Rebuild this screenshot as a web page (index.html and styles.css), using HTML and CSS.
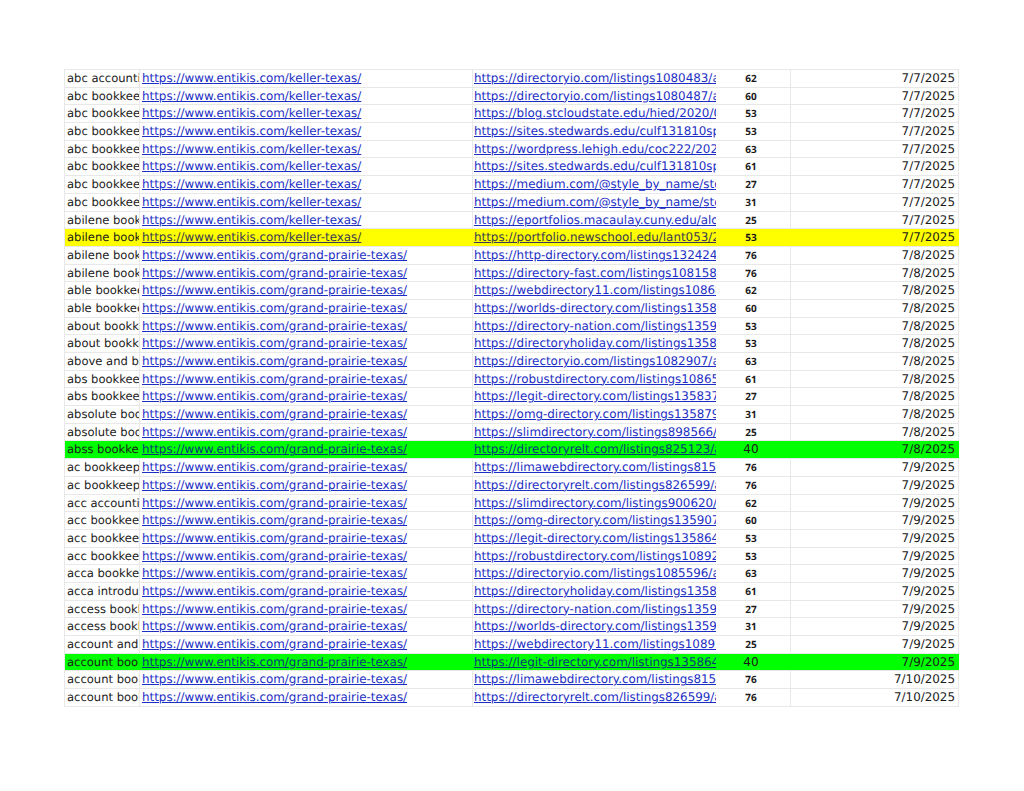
FILE: index.html
```html
<!DOCTYPE html>
<html lang="en">
<head>
<meta charset="utf-8">
<title>Listings</title>
<link rel="stylesheet" href="styles.css">
</head>
<body>
<main class="sheet">
<div class="row"><div class="c kw">abc accounting</div><div class="c site"><a href="#">https://www.entikis.com/keller-texas/</a></div><div class="c url"><a href="#">https://directoryio.com/listings1080483/abc</a></div><div class="c num">62</div><div class="c date">7/7/2025</div></div>
<div class="row"><div class="c kw">abc bookkeeping</div><div class="c site"><a href="#">https://www.entikis.com/keller-texas/</a></div><div class="c url"><a href="#">https://directoryio.com/listings1080487/abc</a></div><div class="c num">60</div><div class="c date">7/7/2025</div></div>
<div class="row"><div class="c kw">abc bookkeeping</div><div class="c site"><a href="#">https://www.entikis.com/keller-texas/</a></div><div class="c url"><a href="#">https://blog.stcloudstate.edu/hied/2020/05/abc</a></div><div class="c num">53</div><div class="c date">7/7/2025</div></div>
<div class="row"><div class="c kw">abc bookkeeping</div><div class="c site"><a href="#">https://www.entikis.com/keller-texas/</a></div><div class="c url"><a href="#">https://sites.stedwards.edu/culf131810spring</a></div><div class="c num">53</div><div class="c date">7/7/2025</div></div>
<div class="row"><div class="c kw">abc bookkeeping</div><div class="c site"><a href="#">https://www.entikis.com/keller-texas/</a></div><div class="c url"><a href="#">https://wordpress.lehigh.edu/coc222/2025/07</a></div><div class="c num">63</div><div class="c date">7/7/2025</div></div>
<div class="row"><div class="c kw">abc bookkeeping</div><div class="c site"><a href="#">https://www.entikis.com/keller-texas/</a></div><div class="c url"><a href="#">https://sites.stedwards.edu/culf131810spring</a></div><div class="c num">61</div><div class="c date">7/7/2025</div></div>
<div class="row"><div class="c kw">abc bookkeeping</div><div class="c site"><a href="#">https://www.entikis.com/keller-texas/</a></div><div class="c url"><a href="#">https://medium.com/@style_by_name/story</a></div><div class="c num">27</div><div class="c date">7/7/2025</div></div>
<div class="row"><div class="c kw">abc bookkeeping</div><div class="c site"><a href="#">https://www.entikis.com/keller-texas/</a></div><div class="c url"><a href="#">https://medium.com/@style_by_name/story</a></div><div class="c num">31</div><div class="c date">7/7/2025</div></div>
<div class="row"><div class="c kw">abilene bookkeeping</div><div class="c site"><a href="#">https://www.entikis.com/keller-texas/</a></div><div class="c url"><a href="#">https://eportfolios.macaulay.cuny.edu/alons</a></div><div class="c num">25</div><div class="c date">7/7/2025</div></div>
<div class="row yellow"><div class="c kw">abilene bookkeeping</div><div class="c site"><a href="#">https://www.entikis.com/keller-texas/</a></div><div class="c url"><a href="#">https://portfolio.newschool.edu/lant053/2025</a></div><div class="c num">53</div><div class="c date">7/7/2025</div></div>
<div class="row"><div class="c kw">abilene bookkeeping</div><div class="c site"><a href="#">https://www.entikis.com/grand-prairie-texas/</a></div><div class="c url"><a href="#">https://http-directory.com/listings13242411/</a></div><div class="c num">76</div><div class="c date">7/8/2025</div></div>
<div class="row"><div class="c kw">abilene bookkeeping</div><div class="c site"><a href="#">https://www.entikis.com/grand-prairie-texas/</a></div><div class="c url"><a href="#">https://directory-fast.com/listings10815871/</a></div><div class="c num">76</div><div class="c date">7/8/2025</div></div>
<div class="row"><div class="c kw">able bookkeeping</div><div class="c site"><a href="#">https://www.entikis.com/grand-prairie-texas/</a></div><div class="c url"><a href="#">https://webdirectory11.com/listings1086811/</a></div><div class="c num">62</div><div class="c date">7/8/2025</div></div>
<div class="row"><div class="c kw">able bookkeeping</div><div class="c site"><a href="#">https://www.entikis.com/grand-prairie-texas/</a></div><div class="c url"><a href="#">https://worlds-directory.com/listings1358811/</a></div><div class="c num">60</div><div class="c date">7/8/2025</div></div>
<div class="row"><div class="c kw">about bookkeeping</div><div class="c site"><a href="#">https://www.entikis.com/grand-prairie-texas/</a></div><div class="c url"><a href="#">https://directory-nation.com/listings1359011/</a></div><div class="c num">53</div><div class="c date">7/8/2025</div></div>
<div class="row"><div class="c kw">about bookkeeping</div><div class="c site"><a href="#">https://www.entikis.com/grand-prairie-texas/</a></div><div class="c url"><a href="#">https://directoryholiday.com/listings1358511/</a></div><div class="c num">53</div><div class="c date">7/8/2025</div></div>
<div class="row"><div class="c kw">above and beyond</div><div class="c site"><a href="#">https://www.entikis.com/grand-prairie-texas/</a></div><div class="c url"><a href="#">https://directoryio.com/listings1082907/abov</a></div><div class="c num">63</div><div class="c date">7/8/2025</div></div>
<div class="row"><div class="c kw">abs bookkeeping</div><div class="c site"><a href="#">https://www.entikis.com/grand-prairie-texas/</a></div><div class="c url"><a href="#">https://robustdirectory.com/listings1086511/</a></div><div class="c num">61</div><div class="c date">7/8/2025</div></div>
<div class="row"><div class="c kw">abs bookkeeping</div><div class="c site"><a href="#">https://www.entikis.com/grand-prairie-texas/</a></div><div class="c url"><a href="#">https://legit-directory.com/listings1358371/</a></div><div class="c num">27</div><div class="c date">7/8/2025</div></div>
<div class="row"><div class="c kw">absolute bookkeeping</div><div class="c site"><a href="#">https://www.entikis.com/grand-prairie-texas/</a></div><div class="c url"><a href="#">https://omg-directory.com/listings1358791/</a></div><div class="c num">31</div><div class="c date">7/8/2025</div></div>
<div class="row"><div class="c kw">absolute bookkeeping</div><div class="c site"><a href="#">https://www.entikis.com/grand-prairie-texas/</a></div><div class="c url"><a href="#">https://slimdirectory.com/listings898566/abs</a></div><div class="c num">25</div><div class="c date">7/8/2025</div></div>
<div class="row green"><div class="c kw">abss bookkeeping</div><div class="c site"><a href="#">https://www.entikis.com/grand-prairie-texas/</a></div><div class="c url"><a href="#">https://directoryrelt.com/listings825123/abss</a></div><div class="c num plain">40</div><div class="c date">7/8/2025</div></div>
<div class="row"><div class="c kw">ac bookkeeping</div><div class="c site"><a href="#">https://www.entikis.com/grand-prairie-texas/</a></div><div class="c url"><a href="#">https://limawebdirectory.com/listings8157111/</a></div><div class="c num">76</div><div class="c date">7/9/2025</div></div>
<div class="row"><div class="c kw">ac bookkeeping</div><div class="c site"><a href="#">https://www.entikis.com/grand-prairie-texas/</a></div><div class="c url"><a href="#">https://directoryrelt.com/listings826599/acbo</a></div><div class="c num">76</div><div class="c date">7/9/2025</div></div>
<div class="row"><div class="c kw">acc accounting</div><div class="c site"><a href="#">https://www.entikis.com/grand-prairie-texas/</a></div><div class="c url"><a href="#">https://slimdirectory.com/listings900620/acc</a></div><div class="c num">62</div><div class="c date">7/9/2025</div></div>
<div class="row"><div class="c kw">acc bookkeeping</div><div class="c site"><a href="#">https://www.entikis.com/grand-prairie-texas/</a></div><div class="c url"><a href="#">https://omg-directory.com/listings1359071/</a></div><div class="c num">60</div><div class="c date">7/9/2025</div></div>
<div class="row"><div class="c kw">acc bookkeeping</div><div class="c site"><a href="#">https://www.entikis.com/grand-prairie-texas/</a></div><div class="c url"><a href="#">https://legit-directory.com/listings1358641/</a></div><div class="c num">53</div><div class="c date">7/9/2025</div></div>
<div class="row"><div class="c kw">acc bookkeeping</div><div class="c site"><a href="#">https://www.entikis.com/grand-prairie-texas/</a></div><div class="c url"><a href="#">https://robustdirectory.com/listings1089211/</a></div><div class="c num">53</div><div class="c date">7/9/2025</div></div>
<div class="row"><div class="c kw">acca bookkeeping</div><div class="c site"><a href="#">https://www.entikis.com/grand-prairie-texas/</a></div><div class="c url"><a href="#">https://directoryio.com/listings1085596/acca</a></div><div class="c num">63</div><div class="c date">7/9/2025</div></div>
<div class="row"><div class="c kw">acca introduction</div><div class="c site"><a href="#">https://www.entikis.com/grand-prairie-texas/</a></div><div class="c url"><a href="#">https://directoryholiday.com/listings1358811/</a></div><div class="c num">61</div><div class="c date">7/9/2025</div></div>
<div class="row"><div class="c kw">access bookkeeping</div><div class="c site"><a href="#">https://www.entikis.com/grand-prairie-texas/</a></div><div class="c url"><a href="#">https://directory-nation.com/listings1359211/</a></div><div class="c num">27</div><div class="c date">7/9/2025</div></div>
<div class="row"><div class="c kw">access bookkeeping</div><div class="c site"><a href="#">https://www.entikis.com/grand-prairie-texas/</a></div><div class="c url"><a href="#">https://worlds-directory.com/listings1359111/</a></div><div class="c num">31</div><div class="c date">7/9/2025</div></div>
<div class="row"><div class="c kw">account and</div><div class="c site"><a href="#">https://www.entikis.com/grand-prairie-texas/</a></div><div class="c url"><a href="#">https://webdirectory11.com/listings1089511/</a></div><div class="c num">25</div><div class="c date">7/9/2025</div></div>
<div class="row green"><div class="c kw">account bookkeeping</div><div class="c site"><a href="#">https://www.entikis.com/grand-prairie-texas/</a></div><div class="c url"><a href="#">https://legit-directory.com/listings1358641/</a></div><div class="c num plain">40</div><div class="c date">7/9/2025</div></div>
<div class="row"><div class="c kw">account bookkeeping</div><div class="c site"><a href="#">https://www.entikis.com/grand-prairie-texas/</a></div><div class="c url"><a href="#">https://limawebdirectory.com/listings8157111/</a></div><div class="c num">76</div><div class="c date">7/10/2025</div></div>
<div class="row"><div class="c kw">account bookkeeping</div><div class="c site"><a href="#">https://www.entikis.com/grand-prairie-texas/</a></div><div class="c url"><a href="#">https://directoryrelt.com/listings826599/acco</a></div><div class="c num">76</div><div class="c date">7/10/2025</div></div>
</main>
</body>
</html>
```
FILE: styles.css
```css
html, body {
  margin: 0;
  background: #fff;
}
.sheet {
  width: 895px;
  margin: 69px 0 0 64px;
  border-top: 1px solid #e8e8e8;
  border-left: 1px solid #e8e8e8;
  box-sizing: border-box;
  font: 11.9px "DejaVu Sans", Verdana, sans-serif;
  color: #1a1a1a;
}
.row {
  display: grid;
  grid-template-columns: 75px 333px 243px 75px 1fr;
  height: 17.69px;
  box-sizing: border-box;
  border-bottom: 1px solid #e8e8e8;
  line-height: 17.6px;
  text-rendering: geometricPrecision;
}
.c {
  overflow: hidden;
  white-space: nowrap;
  padding-left: 2px;
}
.kw { border-right: 1px solid #e8e8e8; padding-left: 2px; font-size: 11.55px; }
.site { border-right: 1px solid #e8e8e8; padding-left: 2px; }
.url { padding-left: 1px; }
.num {
  text-align: center;
  font: bold 10px/17.6px "Open Sans", "Noto Sans", sans-serif;
  padding: 0 4px 0 0;
  border-right: 1px solid #e8e8e8;
}
.num.plain {
  font: 12px/17.6px "DejaVu Sans", Verdana, sans-serif;
}
.date {
  text-align: right;
  padding: 0 3px 0 0;
  border-right: 1px solid #e8e8e8;
}
a { color: #1c2ec4; }
.yellow { background: #ffff00; }
.green { background: #00ff00; }
.yellow a { color: #3a3a52; }
.green a { color: #003c78; }
.yellow .c, .green .c { border-right-color: transparent; }
```
